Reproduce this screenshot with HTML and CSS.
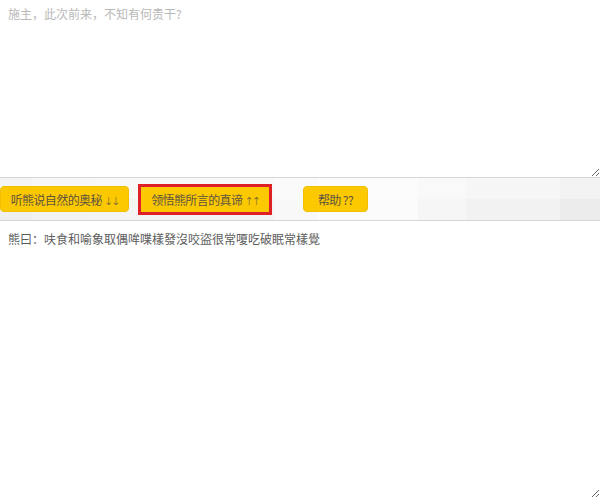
FILE: index.html
```html
<!DOCTYPE html>
<html lang="zh-CN">
<head>
    <meta charset="UTF-8">
    <meta name="viewport" content="width=device-width, initial-scale=1.0">
    <title>与熊论道</title>
    <link rel="stylesheet" href="styles.css">
</head>
<body>
    <textarea id="plain" class="box box-top" placeholder="施主，此次前来，不知有何贵干?"></textarea>

    <div class="toolbar">
      <button class="btn btn-encode">听熊说自然的奥秘 <span class="arrows">↓↓</span></button>
      <button class="btn btn-decode">领悟熊所言的真谛 <span class="arrows">↑↑</span></button>
      <button class="btn btn-help">帮助 ??</button>
    </div>

    <textarea id="bear" class="box box-bottom">熊曰：呋食和喻象取偶哞喋樣發沒咬盜很常嗄吃破眠常樣覺</textarea>
</body>
</html>
```

FILE: styles.css
```css
html, body {
  margin: 0;
  height: 100%;
}
body {
  display: flex;
  flex-direction: column;
  font-family: "Noto Sans CJK SC", "Liberation Sans", sans-serif;
  font-size: 12px;
}

.box {
  display: block;
  width: 100%;
  box-sizing: border-box;
  margin: 0;
  border: 0;
  border-bottom: 1px solid #d6d6d6;
  padding: 5px 8px;
  font-family: inherit;
  font-size: 12px;
  line-height: 18px;
  color: #5c5c5c;
  background: #fff;
  outline: none;
}
.box::placeholder {
  color: #b8b8b8;
}
.box-top {
  height: 178px;
}
.box-bottom {
  flex: 1;
  border-bottom: 0;
  border-top: 1px solid #d6d6d6;
  padding-top: 9px;
}

/* tiled grey strip behind the buttons */
.toolbar {
  display: flex;
  align-items: center;
  height: 42px;
  background:
    linear-gradient(to bottom, rgba(255,255,255,0.35) 0, rgba(255,255,255,0.35) 50%, rgba(0,0,0,0) 50%),
    linear-gradient(to right, #efefef 0, #efefef 33px, #f2f2f2 33px, #f2f2f2 90px, #f4f4f4 90px,
      #f4f4f4 274px, #f8f8f8 274px, #f8f8f8 318px, #fbfbfb 318px, #fbfbfb 418px,
      #f6f6f6 418px, #f6f6f6 466px, #f2f2f2 466px, #f2f2f2 560px, #ececec 560px);
}

.btn {
  flex: none;
  height: 26px;
  padding: 0;
  border: 1px solid #f0c000;
  border-radius: 4px;
  background: #fcc800;
  color: #5e5440;
  font-family: inherit;
  font-size: 12px;
  letter-spacing: -0.6px;
  white-space: nowrap;
  cursor: pointer;
}
.btn .arrows {
  font-family: "DejaVu Sans", sans-serif;
  font-size: 11px;
  font-weight: 300;
  letter-spacing: -2px;
}
.btn-encode {
  width: 129px;
  margin-left: 0;
}
.btn-decode {
  width: 134px;
  height: 31px;
  margin-left: 9px;
  border: 3px solid #e02027;
  border-radius: 0;
}
.btn-help {
  width: 65px;
  margin-left: 31px;
}
```
